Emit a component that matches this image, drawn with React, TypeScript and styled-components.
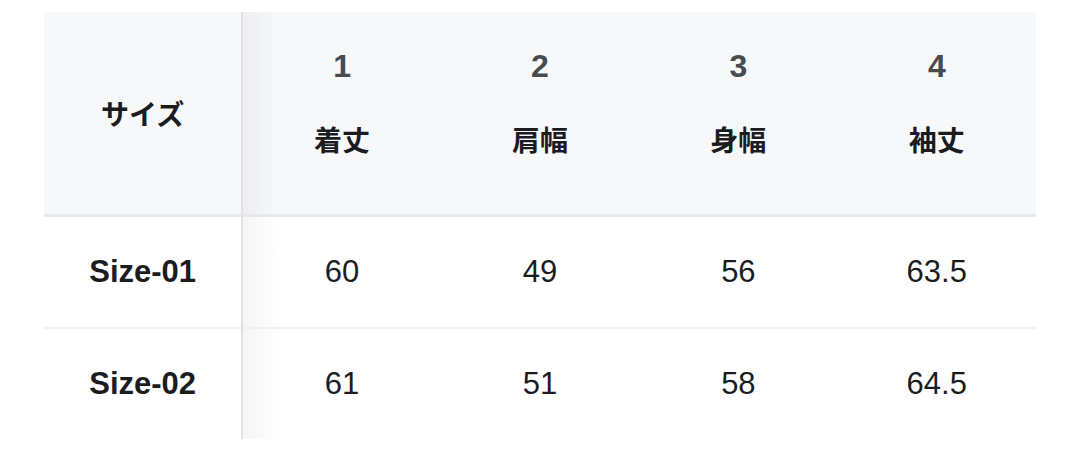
import * as React from "react";
import styled, { createGlobalStyle } from "styled-components";

const GlobalStyle = createGlobalStyle`
  body {
    margin: 0;
    background: #ffffff;
    font-family: "Liberation Sans", "Noto Sans CJK JP", sans-serif;
    color: #1b1c1f;
  }
`;

const SPage = styled.div`
  padding: 12px 0 0 44px;
`;

const STable = styled.table`
  width: 992px;
  table-layout: fixed;
  border-collapse: collapse;
  border-spacing: 0;
`;

interface ICell {
  sticky?: boolean;
}

const SHeadCell = styled.th<ICell>`
  position: relative;
  height: 202px;
  padding: 0;
  background: #f7f8fa;
  border-bottom: 3px solid #e6e8eb;
  font-weight: 700;
  vertical-align: ${(props) => (props.sticky ? "middle" : "top")};
  text-align: center;
  ${(props) => props.sticky && "border-right: 2px solid #e1e2e5;"}
`;

const SHeadInner = styled.div`
  display: flex;
  flex-direction: column;
  align-items: center;
  gap: 37px;
  padding-top: 36px;
`;

const SNumber = styled.span`
  font-size: 32px;
  line-height: 36px;
  color: #484b50;
`;

const SLabel = styled.span`
  font-family: "Noto Sans CJK JP", sans-serif;
  font-size: 28px;
  line-height: 36px;
  color: #1b1c1f;
`;

const SCell = styled.td<ICell>`
  position: relative;
  height: 110px;
  padding: 0;
  text-align: center;
  vertical-align: middle;
  font-size: 31px;
  font-weight: ${(props) => (props.sticky ? 700 : 400)};
  color: #1b1c1f;
  ${(props) => props.sticky && "border-right: 2px solid #e1e2e5;"}
`;

const SRow = styled.tr<{ last?: boolean }>`
  border-bottom: ${(props) => (props.last ? "none" : "2px solid #f0f1f3")};
`;

// soft shadow cast by the fixed first column
const SShade = styled.span`
  position: absolute;
  top: 0;
  bottom: 0;
  left: 0;
  width: 36px;
  background: linear-gradient(to right, rgba(0, 0, 0, 0.04), rgba(0, 0, 0, 0));
  pointer-events: none;
`;

const columns = [
  { no: "1", label: "着丈" },
  { no: "2", label: "肩幅" },
  { no: "3", label: "身幅" },
  { no: "4", label: "袖丈" },
];

const rows = [
  { name: "Size-01", values: ["60", "49", "56", "63.5"] },
  { name: "Size-02", values: ["61", "51", "58", "64.5"] },
];

const App = () => {
  return (
    <SPage>
      <GlobalStyle />
      <STable>
        <thead>
          <tr>
            <SHeadCell sticky>
              <SLabel>サイズ</SLabel>
            </SHeadCell>
            {columns.map((col, index) => (
              <SHeadCell key={col.no}>
                {index === 0 && <SShade />}
                <SHeadInner>
                  <SNumber>{col.no}</SNumber>
                  <SLabel>{col.label}</SLabel>
                </SHeadInner>
              </SHeadCell>
            ))}
          </tr>
        </thead>
        <tbody>
          {rows.map((row, rowIndex) => (
            <SRow key={row.name} last={rowIndex === rows.length - 1}>
              <SCell sticky>{row.name}</SCell>
              {row.values.map((value, index) => (
                <SCell key={index}>
                  {index === 0 && <SShade />}
                  {value}
                </SCell>
              ))}
            </SRow>
          ))}
        </tbody>
      </STable>
    </SPage>
  );
};

export default App;
